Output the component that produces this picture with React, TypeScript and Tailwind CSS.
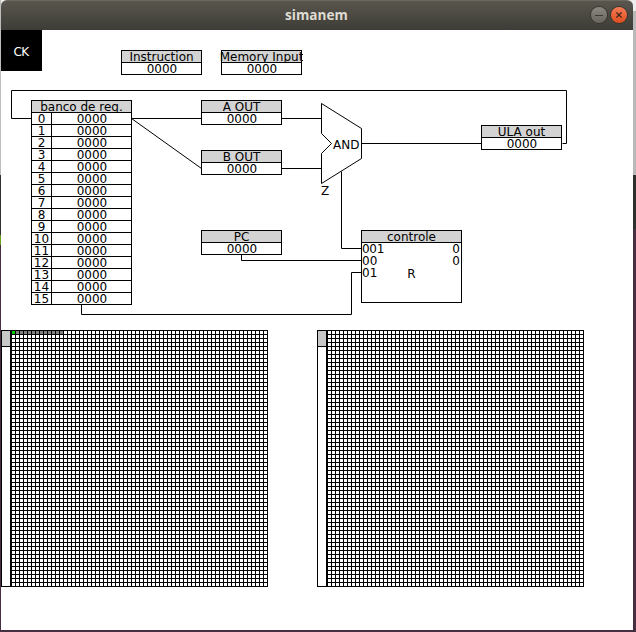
import React from "react";

const REGISTERS = Array.from({ length: 16 }, (_, i) => ({ name: String(i), value: "0000" }));

function Register({ title, className, value = "0000" }: { title: string; className: string; value?: string }) {
  return (
    <div className={`absolute flex h-[25px] w-[81px] flex-col border border-black bg-white ${className}`}>
      <div className="flex h-3 justify-center border-b border-black bg-[#d3d3d3] leading-[13px] whitespace-nowrap [clip-path:inset(0_-2px)]">{title}</div>
      <div className="flex h-[11px] justify-center pl-px leading-[13px]">{value}</div>
    </div>
  );
}

function RegisterBank() {
  return (
    <div className="absolute top-[70px] left-[30px] flex w-[101px] flex-col border border-b-0 border-black bg-white">
      <div className="flex h-3 justify-center overflow-hidden border-b border-black bg-[#d3d3d3] leading-[13px]">banco de reg.</div>
      {REGISTERS.map((r) => (
        <div key={r.name} className="flex h-3 border-b border-black leading-[13px]">
          <div className="flex w-5 justify-center border-r border-black">{r.name}</div>
          <div className="flex flex-1 justify-center pl-px">{r.value}</div>
        </div>
      ))}
    </div>
  );
}

function Control() {
  return (
    <div className="absolute top-[200px] left-[360px] h-[73px] w-[101px] border border-black bg-white">
      <div className="flex h-3 justify-center border-b border-black bg-[#d3d3d3] leading-[13px]">controle</div>
      <div className="flex h-3 justify-between pr-px leading-[13px]">
        <span className="tracking-[-0.3px]">001</span>
        <span>0</span>
      </div>
      <div className="flex h-3 justify-between pr-px leading-[13px]">
        <span>00</span>
        <span>0</span>
      </div>
      <div className="h-3 leading-[13px]">01</div>
      <div className="-mt-[11px] text-center leading-[13px]">R</div>
    </div>
  );
}

function Memory({ className, used = 0 }: { className: string; used?: number }) {
  const cells = Array.from({ length: used }, (_, i) => i);
  return (
    <div className={`absolute flex h-[257px] ${className}`}>
      <div className="w-[10px] border border-black bg-white">
        <div className="h-4 border-b border-black bg-[#c8c8c8]" />
      </div>
      <div className="w-[257px] bg-white bg-[linear-gradient(to_right,#000_1px,transparent_1px),linear-gradient(to_bottom,#000_1px,transparent_1px)] bg-[size:4px_4px]">
        <div className="flex gap-px pt-px pl-px">
          {cells.map((i) => (
            <div key={i} className={`size-[3px] ${i === 0 ? "bg-[#00c800]" : "bg-[#808080]"}`} />
          ))}
        </div>
      </div>
    </div>
  );
}

function Wires() {
  return (
    <svg className="absolute inset-0" width="632" height="600" fill="none" stroke="#000" strokeWidth="1">
      <g transform="translate(-0.5 -29.5)">
        <path d="M31 118H11V90H566V143H562" />
        <path d="M131 118H201M281 118H321M281 168H321M361 143H481" />
        <path d="M131 118L201 168" />
        <path d="M321 103V133L331 143L321 153V183L361 158V128Z" />
        <path d="M341 171V248H361M241 254V260H361M81 304V314H351V272H361" />
      </g>
    </svg>
  );
}

export default function App() {
  return (
    <div className="flex h-[632px] w-[636px] flex-col overflow-hidden bg-[#462f40] font-['DejaVu_Sans',sans-serif] text-[12px] text-black">
      <div className="flex h-[630px]">
        <div className="flex w-px flex-col">
          <div className="h-[175px] bg-[#bdbdbd]" />
          <div className="h-[60px] bg-[#303030]" />
          <div className="h-[10px] bg-[#68a020]" />
        </div>
        <div className="flex w-[632px] flex-col bg-gradient-to-b from-[#eeeeee] from-[1%] to-[#bbbbbb] to-[5%]">
          <header className="relative flex h-[30px] items-center justify-end gap-1 rounded-t-[6px] border-t border-[#6b685f] bg-gradient-to-b from-[#59564e] to-[#3d3c36] pr-[6px] pb-px">
            <h1 className="absolute inset-x-0 top-[5px] -left-px text-center font-['Open_Sans','Noto_Sans',sans-serif] text-[13.6px] leading-[18px] font-bold text-[#dfdbd2]">simanem</h1>
            <button className="flex size-4 items-center justify-center rounded-full bg-gradient-to-b from-[#8b8981] to-[#66645c] ring-1 ring-[#35342f]">
              <span className="h-px w-2 bg-[#3b3a35]" />
            </button>
            <button className="flex size-4 items-center justify-center rounded-full bg-gradient-to-b from-[#f47b54] to-[#df4b1b] ring-1 ring-[#35342f]">
              <svg width="6" height="6" viewBox="0 0 6 6" stroke="#42281d" strokeWidth="1.3">
                <path d="M0.4 0.4L5.6 5.6M5.6 0.4L0.4 5.6" />
              </svg>
            </button>
          </header>
          <main className="relative h-[600px] bg-white">
            <div className="flex size-[41px] items-center justify-center bg-black pt-[3px] pr-px tracking-[-0.5px] text-white">CK</div>
            <Wires />
            <Register title="Instruction" className="top-[20px] left-[120px]" />
            <Register title="Memory Input" className="top-[20px] left-[220px]" />
            <RegisterBank />
            <Register title="A OUT" className="top-[70px] left-[200px]" />
            <Register title="B OUT" className="top-[120px] left-[200px]" />
            <Register title="ULA out" className="top-[95px] left-[480px]" />
            <Register title="PC" className="top-[200px] left-[200px]" />
            <Control />
            <span className="absolute top-[108px] left-[332px] leading-[14px]">AND</span>
            <span className="absolute top-[154px] left-[320px] leading-[14px]">Z</span>
            <Memory className="top-[300px] left-0" used={13} />
            <Memory className="top-[300px] left-[316px]" />
          </main>
        </div>
        <div className="flex w-[3px] flex-col">
          <div className="h-[11px] bg-[#eeeeee]" />
          <div className="h-[164px] bg-[#b9b9b9]" />
          <div className="h-[54px] bg-[#2d302c]" />
        </div>
      </div>
    </div>
  );
}
